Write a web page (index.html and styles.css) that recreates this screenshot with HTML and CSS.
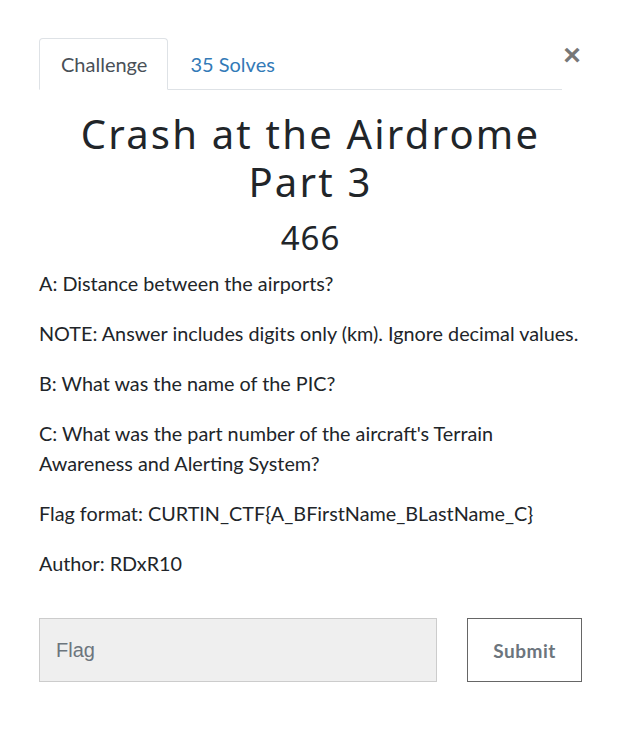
FILE: index.html
```html
<!DOCTYPE html>
<html>
<head>
<meta charset="utf-8">
<link rel="stylesheet" href="styles.css">
</head>
<body>
<div class="modal">
  <div class="top">
    <nav class="tabs">
      <a class="tab active">Challenge</a>
      <a class="tab">35 Solves</a>
    </nav>
    <button class="close">&times;</button>
  </div>
  <h2 class="title">Crash at the Airdrome Part 3</h2>
  <h3 class="value">466</h3>
  <div class="desc">
    <p>A: Distance between the airports?</p>
    <p>NOTE: Answer includes digits only (km). Ignore decimal values.</p>
    <p>B: What was the name of the PIC?</p>
    <p>C: What was the part number of the aircraft's Terrain Awareness and Alerting System?</p>
    <p>Flag format: CURTIN_CTF{A_BFirstName_BLastName_C}</p>
    <p>Author: RDxR10</p>
  </div>
  <form class="submit-row">
    <input class="flag" type="text" placeholder="Flag">
    <button class="submit" type="button">Submit</button>
  </form>
</div>
</body>
</html>
```
FILE: styles.css
```css
html, body { margin: 0; padding: 0; background: #fff; }
body { font-family: Lato, "Open Sans", sans-serif; color: #212529; }
.modal { width: 620px; box-sizing: border-box; padding: 38px 38px 0 39px; }
.top { display: flex; align-items: flex-start; }
.tabs { display: flex; width: 526px; border-bottom: 1px solid #dee2e6; height: 51px; box-sizing: content-box; }
.tab { display: block; font-size: 20px; line-height: 27px; padding: 12px 20px 12px 21px; color: #337ab7; border: 1px solid transparent; border-radius: 4px 4px 0 0; margin-bottom: -1px; }
.tab.active { color: #495057; border-color: #dee2e6 #dee2e6 #fff; background: #fff; }
.close { background: none; border: none; padding: 0; margin: 5px 0 0 0; width: 20px; font-size: 30px; font-weight: 700; line-height: 24px; color: #777; font-family: "Liberation Sans", Arial, sans-serif; }
.title { margin: 20px auto 0; max-width: 500px; text-align: center; font-family: "Noto Sans", sans-serif; font-weight: 400; font-size: 40px; line-height: 48px; letter-spacing: 2.2px; color: #212529; }
.value { margin: 12px 0 0; text-align: center; font-family: "Noto Sans", sans-serif; font-weight: 400; font-size: 33px; line-height: 40px; letter-spacing: 1px; }
.desc { margin-top: 10px; }
.desc p { margin: 0 0 20px; font-size: 19.8px; line-height: 30px; }
.submit-row { display: flex; gap: 30px; margin-top: 40px; }
.flag { width: 398px; height: 64px; box-sizing: border-box; background: #efefef; border: 1px solid #ccc; padding: 0 16px; font-family: "Liberation Sans", Arial, sans-serif; font-size: 20px; color: #495057; outline: none; }
.flag::placeholder { color: #6c757d; }
.submit { width: 115px; height: 64px; box-sizing: border-box; background: #fff; border: 1px solid #666; font-family: Lato, sans-serif; font-weight: 700; font-size: 19px; color: #6c757d; letter-spacing: 0.5px; }
```
